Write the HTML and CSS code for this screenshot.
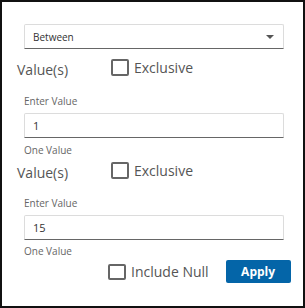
FILE: index.html
```html
<!DOCTYPE html>
<html>
<head>
<meta charset="utf-8">
<link rel="stylesheet" href="styles.css">
</head>
<body>
<div class="panel">
  <div class="select">
    <span class="select-text">Between</span>
    <span class="caret"></span>
  </div>

  <div class="value-row first">
    <span class="value-label">Value(s)</span>
    <label class="check"><span class="box"></span><span class="check-text">Exclusive</span></label>
  </div>
  <div class="hint hint-top first">Enter Value</div>
  <div class="field"><span class="field-text">1</span></div>
  <div class="hint hint-bottom first">One Value</div>

  <div class="value-row second">
    <span class="value-label">Value(s)</span>
    <label class="check"><span class="box"></span><span class="check-text">Exclusive</span></label>
  </div>
  <div class="hint hint-top second">Enter Value</div>
  <div class="field"><span class="field-text">15</span></div>
  <div class="hint hint-bottom second">One Value</div>

  <div class="footer">
    <label class="check"><span class="box"></span><span class="check-text">Include Null</span></label>
    <button class="apply">Apply</button>
  </div>
</div>
</body>
</html>
```

FILE: styles.css
```css
html, body {
  margin: 0;
  padding: 0;
  background: #fff;
}
body {
  font-family: "Open Sans", "Liberation Sans", sans-serif;
}
.panel {
  box-sizing: border-box;
  width: 305px;
  height: 308px;
  border: 2px solid #111;
  padding: 22px 0 0 15px;
}
.select {
  box-sizing: border-box;
  width: 260px;
  height: 25px;
  margin-left: 7px;
  border: 1px solid #dcdcdc;
  border-bottom: 1px solid #666;
  border-radius: 2px 2px 0 0;
  display: flex;
  align-items: center;
  justify-content: space-between;
  padding: 0 9px 0 8px;
}
.select-text {
  font-size: 10px;
  color: #333;
  line-height: 14px;
}
.caret {
  width: 0;
  height: 0;
  border-left: 4px solid transparent;
  border-right: 4px solid transparent;
  border-top: 4px solid #555;
  margin-top: 1px;
}
.value-row {
  display: flex;
  align-items: flex-start;
  height: 17px;
}
.value-row.first {
  margin-top: 10px;
}
.value-row.second {
  margin-top: 5px;
}
.value-label {
  width: 94px;
  font-size: 14px;
  line-height: 20px;
  color: #555;
  margin-top: 1px;
}
.check {
  display: flex;
  align-items: center;
  gap: 5px;
}
.box {
  box-sizing: border-box;
  width: 18px;
  height: 17px;
  border: 2px solid #666;
  border-radius: 2px;
}
.check-text {
  font-size: 14px;
  line-height: 17px;
  color: #555;
}
.hint {
  font-size: 10px;
  line-height: 14px;
  color: #666;
  margin-left: 7px;
}
.hint-top.first {
  margin-top: 18px;
}
.hint-top.second {
  margin-top: 17px;
}
.hint-bottom {
  height: 14px;
}
.hint-bottom.first {
  margin-top: 5px;
}
.hint-bottom.second {
  margin-top: 4px;
}
.field {
  box-sizing: border-box;
  width: 260px;
  height: 25px;
  margin-left: 7px;
  margin-top: 5px;
  border: 1px solid #dcdcdc;
  border-bottom: 1px solid #666;
  border-radius: 2px 2px 0 0;
  display: flex;
  align-items: center;
  padding-left: 8px;
}
.field-text {
  font-size: 11px;
  color: #333;
}
.footer {
  display: flex;
  align-items: center;
  margin-top: 2px;
  margin-left: 91px;
  height: 23px;
}
.footer .box {
  height: 16px;
}
.apply {
  margin-left: 17px;
  width: 65px;
  height: 23px;
  border: none;
  border-radius: 2px;
  background: #0465a8;
  color: #fff;
  font-family: "Open Sans", "Liberation Sans", sans-serif;
  font-weight: 700;
  font-size: 12px;
  padding: 0;
}
```
